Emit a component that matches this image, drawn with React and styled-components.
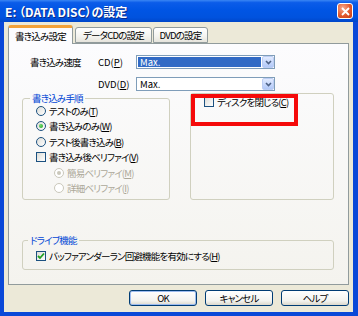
import React from 'react'
import styled, { createGlobalStyle } from 'styled-components'

const GlobalStyle = createGlobalStyle`
  html, body {
    margin: 0;
    padding: 0;
    background: #fff;
  }
  body {
    font-family: "Noto Sans CJK JP", "Liberation Sans", sans-serif;
    font-size: 9.5px;
    font-feature-settings: "palt";
    letter-spacing: -0.8px;
    overflow: hidden;
  }
`

const Window = styled.div`
  width: 358px;
  height: 316px;
  display: flex;
  flex-direction: column;
  background: #0a48d8;
`

const TitleBar = styled.div`
  height: 22px;
  flex: none;
  display: flex;
  align-items: center;
  justify-content: space-between;
  padding: 0 5px 0 5px;
  background: linear-gradient(#3a86f4 0%, #0b5ce9 12%, #0055e4 45%, #0052de 80%, #0047c9 100%);
  color: #fff;
  font-weight: bold;
  font-size: 12px;
  letter-spacing: 0;
  text-shadow: 1px 1px 0 #0b2a8a;
`

const CloseButton = styled.div`
  width: 16px;
  height: 16px;
  box-sizing: border-box;
  border: 1px solid #fff;
  border-radius: 3px;
  background: radial-gradient(circle at 35% 30%, #f6a98f 0%, #e2592c 55%, #c23d17 100%);
  display: flex;
  align-items: center;
  justify-content: center;
`

const Client = styled.div`
  flex: 1;
  margin: 0 5px 4px 4px;
  background: #ece9d8;
  padding: 3px 4px 6px 4px;
  display: flex;
  flex-direction: column;
`

const TabStrip = styled.div`
  display: flex;
  align-items: flex-start;
  height: 19px;
  margin-bottom: -1px;
  position: relative;
  z-index: 1;
`

const Tab = styled.div`
  box-sizing: border-box;
  width: ${p => p.$w}px;
  margin-left: ${p => p.$ml || 0}px;
  height: ${p => (p.$active ? 19 : 16)}px;
  margin-top: ${p => (p.$active ? 0 : 2)}px;
  border: 1px solid #919b9c;
  border-bottom: ${p => (p.$active ? 'none' : '1px solid #919b9c')};
  border-radius: 3px 3px 0 0;
  background: ${p => (p.$active ? '#fcfcfe' : 'linear-gradient(#fff, #f3f3ef 60%, #e6e4dc)')};
  border-top: ${p => (p.$active ? '3px solid #f3a23a' : '1px solid #919b9c')};
  display: flex;
  align-items: center;
  justify-content: center;
  white-space: nowrap;
  padding-bottom: ${p => (p.$active ? 1 : 0)}px;
`

const Panel = styled.div`
  position: relative;
  height: 242px;
  box-sizing: border-box;
  border: 1px solid #919b9c;
  background: linear-gradient(#fcfcfe, #f4f3ee);
  padding: 11px 14px 0 13px;
  display: flex;
  flex-direction: column;
`

const SpeedGrid = styled.div`
  display: grid;
  grid-template-columns: 76px 38px 139px;
  grid-auto-rows: 14px;
  row-gap: 8px;
  align-items: center;
`

const SpeedLabel = styled.div`
  padding-left: 8px;
  white-space: nowrap;
`

const DriveLabel = styled.div`
  grid-column: 2;
  white-space: nowrap;
  letter-spacing: 0;
`

const Combo = styled.div`
  height: 14px;
  box-sizing: border-box;
  border: 1px solid #7f9db9;
  background: #fff;
  display: flex;
  align-items: stretch;
  letter-spacing: 0;
`

const ComboValue = styled.div`
  flex: 1;
  display: flex;
  align-items: center;
  padding-left: 2px;
  margin: 1px;
  background: ${p => (p.$selected ? '#316ac5' : 'transparent')};
  color: ${p => (p.$selected ? '#fff' : '#000')};
`

const ComboButton = styled.div`
  width: 12px;
  border-radius: 2px;
  background: linear-gradient(#e2ebfe, #c4d6fb 60%, #b1c8f7);
  border: 1px solid #bccdf3;
  box-sizing: border-box;
  display: flex;
  align-items: center;
  justify-content: center;
`

const GroupRow = styled.div`
  display: flex;
  gap: 20px;
  margin-top: 2px;
`

const Group = styled.fieldset`
  margin: 0;
  margin-top: ${p => p.$mt || 0}px;
  width: ${p => p.$w}px;
  box-sizing: border-box;
  min-width: 0;
  border: 1px solid #d0d0bf;
  border-radius: 3px;
  padding: ${p => p.$pt || 0}px 0 ${p => p.$pb || 3}px 13px;
`

const Legend = styled.legend`
  padding: 0 2px;
  margin-left: ${p => p.$ml}px;
  line-height: 10px;
  color: #0046d5;
  white-space: nowrap;
`

const Option = styled.div`
  display: flex;
  align-items: center;
  height: 15.5px;
  gap: 3px;
  padding-left: ${p => (p.$indent ? 18 : 0)}px;
  color: ${p => (p.$disabled ? '#aca899' : '#000')};
  white-space: nowrap;
`

const RadioDot = styled.span`
  width: 10px;
  height: 10px;
  box-sizing: border-box;
  border-radius: 50%;
  border: 1px solid ${p => (p.$disabled ? '#cac8bb' : '#1c5180')};
  background: ${p => (p.$disabled ? '#fff' : 'linear-gradient(135deg, #dcdcd7, #fff)')};
  display: flex;
  align-items: center;
  justify-content: center;
  flex: none;
  &::after {
    content: '';
    width: 4px;
    height: 4px;
    border-radius: 50%;
    display: ${p => (p.$checked ? 'block' : 'none')};
    background: ${p => (p.$disabled ? '#cac8bb' : 'radial-gradient(circle at 35% 35%, #6fdc6f, #21a121)')};
  }
`

const CheckBox = styled.span`
  width: 10px;
  height: 10px;
  box-sizing: border-box;
  border: 1px solid #1c5180;
  background: linear-gradient(135deg, #dcdcd7, #fff);
  display: flex;
  align-items: center;
  justify-content: center;
  flex: none;
`

const Annotation = styled.div`
  position: absolute;
  left: 182px;
  top: 50px;
  width: 107px;
  height: 32px;
  box-sizing: border-box;
  border: 4px solid #f50a0a;
  pointer-events: none;
`

const ButtonRow = styled.div`
  display: flex;
  justify-content: flex-end;
  gap: 8px;
  margin-top: 5px;
`

const Button = styled.button`
  width: 68px;
  height: 16px;
  box-sizing: border-box;
  border: 1px solid #003c74;
  border-radius: 3px;
  background: linear-gradient(#fff, #f3f3ef 70%, #dcd8cc);
  box-shadow: ${p => (p.$default ? 'inset 0 0 0 1px #9dbcf0' : 'none')};
  font: inherit;
  letter-spacing: inherit;
  padding: 0;
  color: #000;
`

const Radio = ({ checked, disabled, indent, children }) => (
  <Option $indent={indent} $disabled={disabled}>
    <RadioDot $checked={checked} $disabled={disabled} />
    <span>{children}</span>
  </Option>
)

const Check = ({ checked, children }) => (
  <Option>
    <CheckBox>
      {checked && (
        <svg width="8" height="8" viewBox="0 0 8 8">
          <polyline points="1,4 3,6 7,1.5" fill="none" stroke="#21a121" strokeWidth="1.8" />
        </svg>
      )}
    </CheckBox>
    <span>{children}</span>
  </Option>
)

const Chevron = () => (
  <svg width="7" height="5" viewBox="0 0 7 5">
    <polyline points="1,1 3.5,3.5 6,1" fill="none" stroke="#4d6185" strokeWidth="1.6" />
  </svg>
)

export default function App() {
  return (
    <>
      <GlobalStyle />
      <Window>
        <TitleBar>
          <span>E: （DATA DISC）の設定</span>
          <CloseButton>
            <svg width="9" height="9" viewBox="0 0 9 9">
              <path d="M1 1 L8 8 M8 1 L1 8" stroke="#fff" strokeWidth="1.8" />
            </svg>
          </CloseButton>
        </TitleBar>
        <Client>
          <TabStrip>
            <Tab $active $w={65}>書き込み設定</Tab>
            <Tab $w={77} $ml={2}>データCDの設定</Tab>
            <Tab $w={55} $ml={1}>DVDの設定</Tab>
          </TabStrip>
          <Panel>
            <SpeedGrid>
              <SpeedLabel>書き込み速度</SpeedLabel>
              <DriveLabel>CD(<u>P</u>)</DriveLabel>
              <Combo>
                <ComboValue $selected>Max.</ComboValue>
                <ComboButton><Chevron /></ComboButton>
              </Combo>
              <DriveLabel>DVD(<u>D</u>)</DriveLabel>
              <Combo>
                <ComboValue>Max.</ComboValue>
                <ComboButton><Chevron /></ComboButton>
              </Combo>
            </SpeedGrid>
            <GroupRow>
              <Group $w={148}>
                <Legend $ml={-6}>書き込み手順</Legend>
                <Radio>テストのみ(<u>T</u>)</Radio>
                <Radio checked>書き込みのみ(<u>W</u>)</Radio>
                <Radio>テスト後書き込み(<u>B</u>)</Radio>
                <Check>書き込み後ベリファイ(<u>V</u>)</Check>
                <Radio indent checked disabled>簡易ベリファイ(<u>M</u>)</Radio>
                <Radio indent disabled>詳細ベリファイ(<u>I</u>)</Radio>
              </Group>
              <Group $w={144}>
                <Check>ディスクを閉じる(<u>C</u>)</Check>
              </Group>
            </GroupRow>
            <Group $w={312} $mt={35} $pt={3} $pb={5.5}>
              <Legend $ml={-8}>ドライブ機能</Legend>
              <Check checked>バッファアンダーラン回避機能を有効にする(<u>H</u>)</Check>
            </Group>
            <Annotation />
          </Panel>
          <ButtonRow>
            <Button $default>OK</Button>
            <Button>キャンセル</Button>
            <Button>ヘルプ</Button>
          </ButtonRow>
        </Client>
      </Window>
    </>
  )
}
